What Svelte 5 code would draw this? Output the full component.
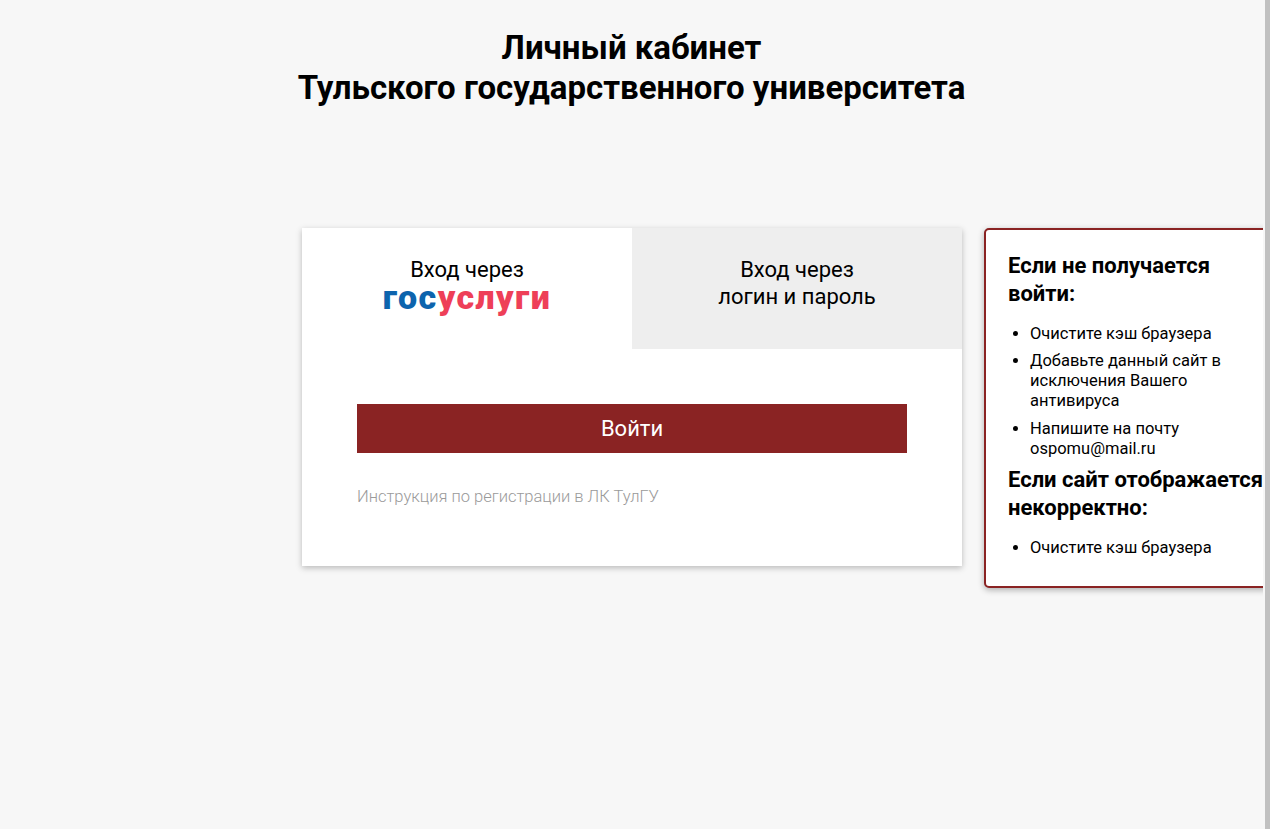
<script>
  const help = [
    { title: 'Если не получается войти:', items: ['Очистите кэш браузера', 'Добавьте данный сайт в исключения Вашего антивируса', 'Напишите на почту ospomu@mail.ru'] },
    { title: 'Если сайт отображается некорректно:', items: ['Очистите кэш браузера'] }
  ];
</script>

<div class="viewport">
  <main class="page">
    <h1>Личный кабинет<br />Тульского государственного университета</h1>
    <div class="stage">
      <section class="card">
        <div class="tabs">
          <div class="tab active">
            <span>Вход через</span>
            <span class="logo"><span class="blue">гос</span><span class="red">услуги</span></span>
          </div>
          <div class="tab">
            <span>Вход через</span>
            <span>логин и пароль</span>
          </div>
        </div>
        <div class="body">
          <button class="login">Войти</button>
          <a class="link" href="#top">Инструкция по регистрации в ЛК ТулГУ</a>
        </div>
      </section>
      <aside class="help">
        {#each help as block}
          <h3>{block.title}</h3>
          <ul>
            {#each block.items as item}
              <li>{item}</li>
            {/each}
          </ul>
        {/each}
      </aside>
    </div>
  </main>
  <div class="scrollbar"></div>
</div>

<style>
  :global(body) {
    margin: 0;
    background: #f7f7f7;
    font-family: Roboto, "Liberation Sans", sans-serif;
    color: #000;
  }
  .viewport {
    display: flex;
    height: 829px;
    overflow: hidden;
  }
  .page {
    flex: 1;
    min-width: 0;
    padding-top: 28px;
    overflow: hidden;
    margin-right: 2px;
  }
  .scrollbar {
    width: 5px;
    background: #c1c1c1;
    flex: none;
  }
  h1 {
    margin: 0;
    font-size: 33px;
    line-height: 40px;
    font-weight: 700;
    text-align: center;
  }
  .stage {
    position: relative;
    width: 660px;
    margin: 120px 0 0 302px;
  }
  .card {
    background: #fff;
    box-shadow: 0 2px 6px rgba(0, 0, 0, 0.25);
    height: 338px;
  }
  .tabs {
    display: flex;
    height: 121px;
  }
  .tab {
    flex: 1;
    background: #eee;
    display: flex;
    flex-direction: column;
    align-items: center;
    padding-top: 28px;
    box-sizing: border-box;
    font-size: 22px;
    line-height: 27px;
  }
  .tab.active {
    background: #fff;
  }
  .logo {
    font-size: 34px;
    line-height: 28px;
    font-weight: 900;
    font-family: Roboto, sans-serif;
    letter-spacing: 1.4px;
  }
  .blue { color: #0d64ad; }
  .red { color: #ee3f58; }
  .body {
    padding: 55px 55px 0;
  }
  .login {
    display: block;
    width: 100%;
    height: 49px;
    border: 0;
    background: #8a2323;
    color: #fff;
    font: 400 22px Roboto, sans-serif;
  }
  .link {
    display: block;
    margin-top: 34px;
    font-size: 16.5px;
    line-height: 20px;
    font-weight: 300;
    color: #9a9a9a;
    text-decoration: none;
  }
  .help {
    position: absolute;
    left: 682px;
    top: 0;
    width: 300px;
    height: 360px;
    box-sizing: border-box;
    padding: 22px 22px 0;
    background: #fff;
    border: 2px solid #8a2323;
    border-radius: 5px;
    box-shadow: 0 2px 6px rgba(0, 0, 0, 0.3);
  }
  h3 {
    margin: 0;
    font-size: 22px;
    line-height: 27.5px;
    font-weight: 700;
    width: 256px;
  }
  ul {
    margin: 16.5px 0 0;
    padding: 0 0 0 22px;
    font-size: 16.5px;
    line-height: 20px;
    width: 210px;
  }
  li {
    margin-bottom: 7.6px;
  }
</style>
